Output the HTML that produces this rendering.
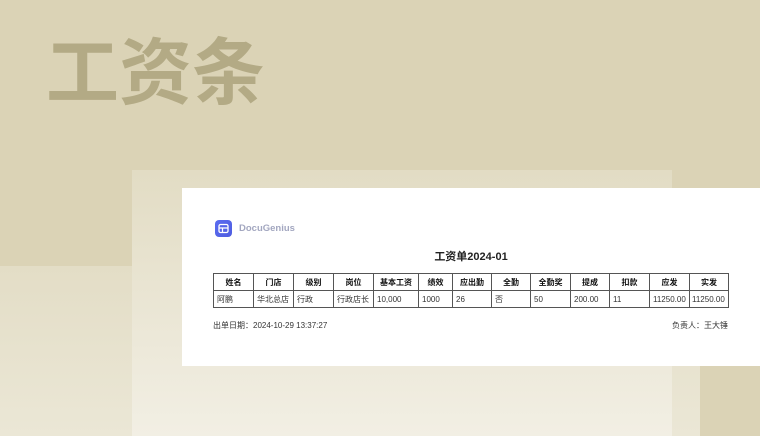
<!DOCTYPE html><html><head><meta charset="utf-8"><style>
body{margin:0;width:760px;height:436px;overflow:hidden;position:relative;background:#dbd3b6;font-family:"Liberation Sans","Noto Sans CJK SC",sans-serif}
.a{position:absolute}
td{border:1px solid #555;font-size:8px;height:16px;padding:0 3px;color:#333;white-space:nowrap;overflow:hidden}
th{border:1px solid #555;font-size:8px;height:16px;padding:0;color:#111}
table{border-collapse:collapse;table-layout:fixed}
</style></head><body>
<div class="a" style="left:0;top:266px;width:760px;height:170px;background:linear-gradient(#e3ddc6,#ebe7d6)"></div>
<div class="a" style="left:700px;top:366px;width:60px;height:70px;background:#dbd3b6"></div>
<div class="a" style="left:132px;top:170px;width:540px;height:266px;background:linear-gradient(#e2dcc4,#f2efe4)"></div>
<div class="a" style="left:46px;top:30px;font-size:73px;font-weight:bold;color:#b3aa85;line-height:88px">工资条</div>
<div class="a" style="left:182px;top:188px;width:578px;height:178px;background:#fff"></div>
<div class="a" style="left:215px;top:220px;width:17px;height:17px;border-radius:4px;background:linear-gradient(135deg,#5a6cf0,#4f5de0)">
<svg width="17" height="17" viewBox="0 0 17 17"><rect x="4" y="4.5" width="9" height="8" rx="1.5" fill="none" stroke="#fff" stroke-width="1.3"/><path d="M4 8h9M7.5 8v4.5" stroke="#fff" stroke-width="1.2"/></svg></div>
<div class="a" style="left:239px;top:223px;font-size:9.5px;font-weight:bold;color:#a3a7c0">DocuGenius</div>
<div class="a" style="left:182px;top:248px;width:578px;text-align:center;font-size:11px;font-weight:bold;color:#222">工资单2024-01</div>
<table class="a" style="left:213px;top:273px;width:515px">
<colgroup><col style="width:40px"><col style="width:40px"><col style="width:40px"><col style="width:40px"><col style="width:45px"><col style="width:34px"><col style="width:39px"><col style="width:39px"><col style="width:40px"><col style="width:39px"><col style="width:40px"><col style="width:40px"><col style="width:39px"></colgroup>
<tr><th>姓名</th><th>门店</th><th>级别</th><th>岗位</th><th>基本工资</th><th>绩效</th><th>应出勤</th><th>全勤</th><th>全勤奖</th><th>提成</th><th>扣款</th><th>应发</th><th>实发</th></tr>
<tr><td>阿鹏</td><td>华北总店</td><td>行政</td><td>行政店长</td><td>10,000</td><td>1000</td><td>26</td><td>否</td><td>50</td><td>200.00</td><td>11</td><td>11250.00</td><td style="padding:0 2px">11250.00</td></tr>
</table>
<div class="a" style="left:213px;top:320px;font-size:8px;color:#333">出单日期：2024-10-29 13:37:27</div>
<div class="a" style="left:600px;top:320px;width:128px;text-align:right;font-size:8px;color:#333">负责人：王大锤</div>
</body></html>
